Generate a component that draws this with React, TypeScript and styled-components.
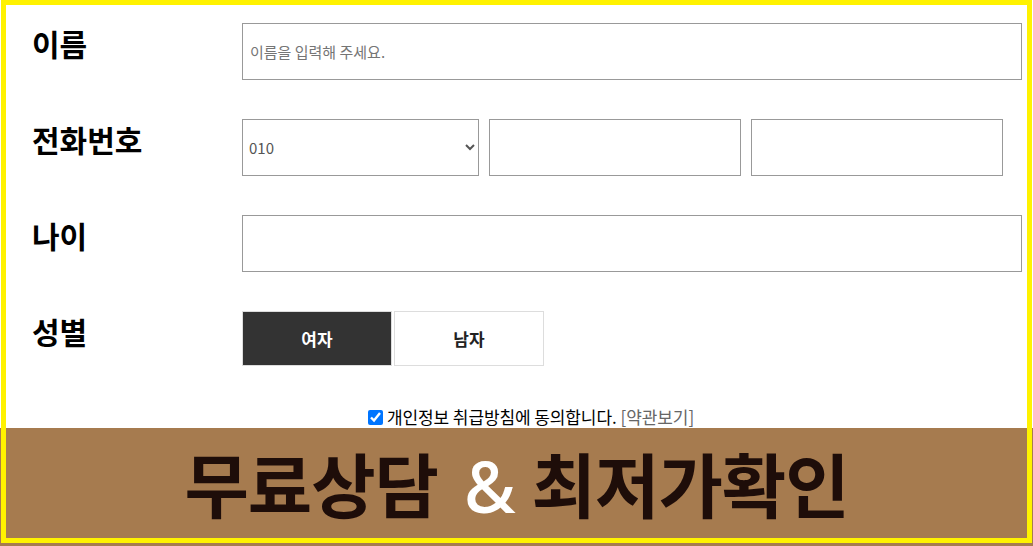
import React from "react";
import styled, { createGlobalStyle } from "styled-components";

const GlobalStyle = createGlobalStyle`
  html, body {
    margin: 0;
    padding: 0;
    background: #ffffff;
    font-family: "Noto Sans CJK KR", "Noto Sans", sans-serif;
    overflow: hidden;
  }
  * { box-sizing: border-box; }
`;

const Page = styled.div`
  position: relative;
  width: 1033px;
  height: 546px;
  overflow: hidden;
  background: #ffffff;
`;

const Form = styled.form`
  display: grid;
  row-gap: 39px;
  padding: 23px 3px 0 32px;
`;

const Row = styled.div`
  display: grid;
  grid-template-columns: 210px 1fr;
  align-items: start;
`;

const Label = styled.div`
  font-size: 30px;
  font-weight: 700;
  color: #000;
  line-height: 40px;
  letter-spacing: 0;
`;

const TextInput = styled.input<{ $w: number }>`
  width: ${(p) => p.$w}px;
  height: 57px;
  border: 1px solid #999;
  border-radius: 0;
  padding: 0 7px;
  font-family: "Noto Sans CJK KR", "Noto Sans", sans-serif;
  font-size: 15px;
  color: #333;
  background: #fff;
  outline: none;
  &::placeholder {
    color: #757575;
  }
`;

const PhoneGroup = styled.div`
  display: flex;
  gap: 10px;
`;

const Select = styled.select`
  width: 237px;
  height: 57px;
  border: 1px solid #999;
  border-radius: 0;
  padding: 0 2px;
  font-family: "Noto Sans CJK KR", "Noto Sans", sans-serif;
  font-size: 15px;
  color: #555;
  background: #fff;
  outline: none;
`;

const GenderGroup = styled.div`
  display: flex;
  gap: 2px;
`;

const GenderButton = styled.button<{ $active?: boolean }>`
  width: 150px;
  height: 55px;
  border: 1px solid #dddddd;
  border-radius: 0;
  background: ${(p) => (p.$active ? "#333333" : "#ffffff")};
  color: ${(p) => (p.$active ? "#ffffff" : "#222222")};
  font-family: "Noto Sans CJK KR", "Noto Sans", sans-serif;
  font-size: 17px;
  font-weight: 700;
  cursor: pointer;
  padding: 0;
`;

const Agree = styled.label`
  display: flex;
  justify-content: center;
  align-items: center;
  height: 22px;
  margin: 40px 0 0 32px;
  width: 998px;
  font-size: 17px;
  color: #000;
  letter-spacing: -0.1px;
  line-height: 22px;
`;

const Check = styled.input`
  width: 15px;
  height: 15px;
  margin: 1px 4px 0 0;
`;

const TermsLink = styled.span`
  color: #666;
  margin-left: 4px;
`;

const Banner = styled.div`
  height: 130px;
  background: #a67b4f;
  display: flex;
  justify-content: center;
  padding-top: 10px;
`;

const BannerText = styled.div`
  font-size: 70px;
  font-weight: 700;
  color: #1e0d09;
  line-height: 90px;
  letter-spacing: -1px;
  white-space: nowrap;
`;

const Amp = styled.span`
  color: #ffffff;
  font-family: "Noto Sans", sans-serif;
  font-weight: 500;
  letter-spacing: 0;
  margin: 0 16px 0 26px;
`;

const Frame = styled.div`
  position: absolute;
  top: 0;
  left: 1px;
  width: 1031px;
  height: 543px;
  border: 5px solid #fff200;
  pointer-events: none;
`;

export default function App() {
  return (
    <Page>
      <GlobalStyle />
      <Form onSubmit={(e) => e.preventDefault()}>
        <Row>
          <Label>이름</Label>
          <TextInput $w={780} placeholder="이름을 입력해 주세요." />
        </Row>
        <Row>
          <Label>전화번호</Label>
          <PhoneGroup>
            <Select defaultValue="010">
              <option value="010">010</option>
              <option value="011">011</option>
              <option value="016">016</option>
              <option value="017">017</option>
            </Select>
            <TextInput $w={252} />
            <TextInput $w={252} />
          </PhoneGroup>
        </Row>
        <Row>
          <Label>나이</Label>
          <TextInput $w={780} />
        </Row>
        <Row>
          <Label>성별</Label>
          <GenderGroup>
            <GenderButton type="button" $active>
              여자
            </GenderButton>
            <GenderButton type="button">남자</GenderButton>
          </GenderGroup>
        </Row>
      </Form>
      <Agree>
        <Check type="checkbox" defaultChecked />
        개인정보 취급방침에 동의합니다.
        <TermsLink>[약관보기]</TermsLink>
      </Agree>
      <Banner>
        <BannerText>
          무료상담<Amp>&amp;</Amp>최저가확인
        </BannerText>
      </Banner>
      <Frame />
    </Page>
  );
}
